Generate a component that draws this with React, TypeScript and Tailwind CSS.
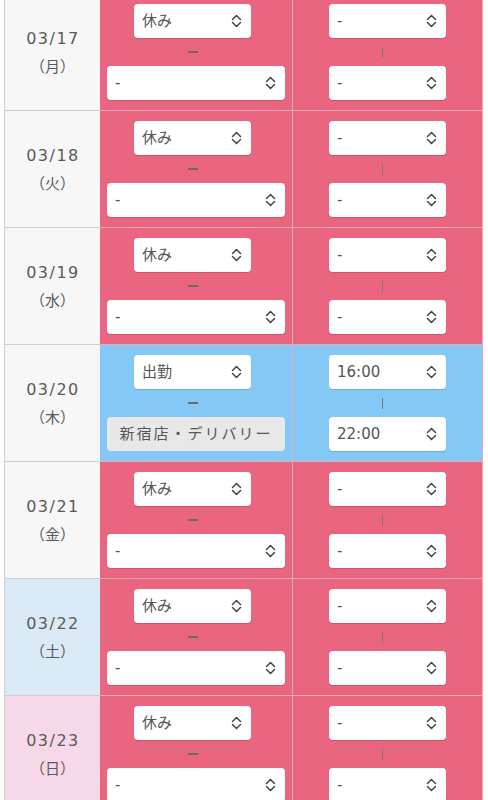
import React from 'react';

type Day = {
  date: string;
  week: string;
  kind: 'normal' | 'sat' | 'sun';
  working?: boolean;
};

const days: Day[] = [
  { date: '03/17', week: '（月）', kind: 'normal' },
  { date: '03/18', week: '（火）', kind: 'normal' },
  { date: '03/19', week: '（水）', kind: 'normal' },
  { date: '03/20', week: '（木）', kind: 'normal', working: true },
  { date: '03/21', week: '（金）', kind: 'normal' },
  { date: '03/22', week: '（土）', kind: 'sat' },
  { date: '03/23', week: '（日）', kind: 'sun' },
];

const font = "font-['DejaVu_Sans','Noto_Sans_CJK_JP',sans-serif]";

function Chevrons() {
  return (
    <svg width="11" height="14" viewBox="0 0 11 14" fill="none" className="shrink-0">
      <path d="M1.5 5.5 L5.5 1.5 L9.5 5.5" stroke="#444" strokeWidth="1.5" strokeLinecap="round" strokeLinejoin="round" />
      <path d="M1.5 8.5 L5.5 12.5 L9.5 8.5" stroke="#444" strokeWidth="1.5" strokeLinecap="round" strokeLinejoin="round" />
    </svg>
  );
}

function FakeSelect({ value, className }: { value: string; className: string }) {
  return (
    <div
      className={`h-[34px] bg-white rounded-[4px] shadow-[0_1px_1px_rgba(0,0,0,0.15)] flex items-center justify-between pl-[8px] pr-[9px] text-[15px] text-[#555] ${className}`}
    >
      <span>{value}</span>
      <Chevrons />
    </div>
  );
}

function Row({ day }: { day: Day }) {
  const dateBg =
    day.kind === 'sat' ? 'bg-[#dae9f6]' : day.kind === 'sun' ? 'bg-[#f6d8e8]' : 'bg-[#f7f7f7]';
  const cellBg = day.working ? 'bg-[#84c8f5]' : 'bg-[#ea6580]';

  return (
    <div className="flex h-[117px]">
      <div
        className={`w-[96px] border-l border-b border-[#cfcfcf] ${dateBg} flex flex-col items-center justify-center text-[#5a5a5a]`}
      >
        <div className="text-[16px] leading-[27px] tracking-[1.5px] pl-[1px]">{day.date}</div>
        <div className="text-[15px] leading-[27px] font-['Noto_Sans_CJK_JP',sans-serif]">{day.week}</div>
      </div>

      <div className={`w-[192px] border-b border-[#efa7b6] ${cellBg} pt-[10px] px-[7px] flex flex-col`}>
        <FakeSelect value={day.working ? '出勤' : '休み'} className="w-[117px] ml-[27px]" />
        <div className="h-[28px] flex items-center justify-center pr-[7px]">
          <div className="w-[10px] h-[1.5px] bg-[#6a6a6a]" />
        </div>
        {day.working ? (
          <div className="h-[34px] w-[178px] rounded-[4px] bg-[#e8e8e8] flex items-center justify-center text-[15px] tracking-[2px] text-[#555]">
            新宿店・デリバリー
          </div>
        ) : (
          <FakeSelect value="-" className="w-[178px]" />
        )}
      </div>

      <div
        className={`w-[191px] border-l border-r border-b border-[#efa7b6] ${cellBg} pt-[10px] flex flex-col items-center`}
      >
        <FakeSelect value={day.working ? '16:00' : '-'} className="w-[117px]" />
        <div className="h-[28px] w-full flex items-center pl-[89px]">
          <div className="w-px h-[11px] bg-[#777]" />
        </div>
        <FakeSelect value={day.working ? '22:00' : '-'} className="w-[117px]" />
      </div>
    </div>
  );
}

export default function App() {
  return (
    <div className={`h-[800px] overflow-hidden bg-white ${font}`}>
      <div className="-mt-[6px] pl-[4px]">
        {days.map((d) => (
          <Row key={d.date} day={d} />
        ))}
      </div>
    </div>
  );
}
